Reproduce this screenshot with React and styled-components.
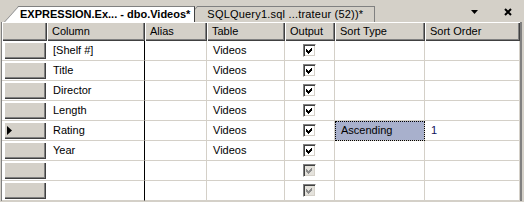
import React from "react";
import styled, { createGlobalStyle } from "styled-components";

const GlobalStyle = createGlobalStyle`
  html, body {
    margin: 0;
    padding: 0;
    background: #d4d0c8;
  }
  body {
    font-family: "Liberation Sans", Arial, sans-serif;
    font-size: 11px;
    color: #000;
  }
`;

const Window = styled.div`
  width: 524px;
  height: 202px;
  background: #d4d0c8;
  display: flex;
  flex-direction: column;
  overflow: hidden;
`;

const TabStrip = styled.div`
  height: 22px;
  box-sizing: border-box;
  display: flex;
  align-items: flex-end;
  padding-left: 4px;
`;

const Tab = styled.div`
  position: relative;
  z-index: ${(p) => (p.$active ? 2 : 1)};
  height: 16px;
  line-height: 16px;
  padding: 0 ${(p) => (p.$active ? 5 : 12)}px 0 ${(p) => (p.$active ? 16 : 24)}px;
  margin-left: ${(p) => (p.$active ? 0 : -12)}px;
  font-weight: ${(p) => (p.$active ? 700 : 400)};
  letter-spacing: ${(p) => (p.$active ? 0 : 0.2)}px;
  white-space: nowrap;

  &::before {
    content: "";
    position: absolute;
    z-index: -1;
    left: 0;
    top: 0;
    bottom: 0;
    width: 20px;
    background: ${(p) => (p.$active ? "#fff" : "#d4d0c8")};
    border-left: 1px solid #808080;
    border-top: 1px solid #808080;
    transform: skewX(-42deg);
    transform-origin: bottom left;
  }

  &::after {
    content: "";
    position: absolute;
    z-index: -1;
    left: 15px;
    right: 0;
    top: 0;
    bottom: 0;
    background: ${(p) => (p.$active ? "#fff" : "#d4d0c8")};
    border-top: 1px solid #808080;
    border-right: 1px solid ${(p) => (p.$active ? "#404040" : "#808080")};
  }
`;

const Controls = styled.div`
  margin-left: auto;
  align-self: center;
  display: flex;
  align-items: center;
  gap: 26px;
  padding: 2px 12px 0 0;
`;

const Grid = styled.div`
  display: grid;
  grid-template-columns: 45px 98px 62px 78px 50px 90px 95px;
  grid-template-rows: 19px repeat(8, 20px);
  width: 518px;
  margin-left: 1px;
  border-left: 1px solid #808080;
  border-right: 2px solid #808080;
  background: #fff;
`;

const HeaderCell = styled.div`
  box-sizing: border-box;
  background: #d4d0c8;
  box-shadow: inset 1px 1px #fff, inset -1px -1px #404040,
    inset -2px -2px #808080;
  padding-left: 5px;
  line-height: 19px;
  white-space: nowrap;
`;

const RowHeader = styled.div`
  box-sizing: border-box;
  display: flex;
  padding: 1px 1px 1px 2px;
  background: #fff;
  border-bottom: 1px solid #d4d0c8;
`;

const RowButton = styled.div`
  flex: 1;
  display: flex;
  align-items: center;
  padding-left: 3px;
  background: #d4d0c8;
  box-shadow: inset 1px 1px #fff, inset -1px -1px #404040,
    inset -2px -2px #808080;
`;

const Cell = styled.div`
  box-sizing: border-box;
  padding-left: 6px;
  line-height: 19px;
  white-space: nowrap;
  color: ${(p) => (p.$number ? "#10105a" : "#000")};
  border-bottom: 1px solid #d4d0c8;
  border-right: 1px solid ${(p) => (p.$divider ? "#000" : "#d4d0c8")};
  background: ${(p) => (p.$selected ? "#a8b0cc" : "transparent")};
  outline: ${(p) => (p.$selected ? "1px dotted #000" : "none")};
  outline-offset: -1px;
`;

const CheckCell = styled(Cell)`
  display: flex;
  align-items: center;
  justify-content: center;
  padding-left: 0;
`;

const CheckBox = styled.div`
  box-sizing: border-box;
  width: 13px;
  height: 13px;
  display: flex;
  align-items: center;
  justify-content: center;
  border-top: 1px solid #808080;
  border-left: 1px solid #808080;
  border-bottom: 1px solid #fff;
  border-right: 1px solid #fff;
  box-shadow: inset 1px 1px #404040, inset -1px -1px #d4d0c8;
  background: ${(p) => (p.$disabled ? "#e4e2dc" : "#fff")};
`;

const Check = ({ color }) => (
  <svg width="9" height="9" viewBox="0 0 9 9" shapeRendering="crispEdges">
    <path d="M1 3h1v1h1v1h1v-1h1v-1h1v-1h1v3h-1v1h-1v1h-1v1h-1v-1h-1v-1h-1z" fill={color} />
  </svg>
);

const Arrow = () => (
  <svg width="5" height="9" viewBox="0 0 5 9">
    <path d="M0 0 L5 4.5 L0 9 Z" fill="#000" />
  </svg>
);

const columns = ["Column", "Alias", "Table", "Output", "Sort Type", "Sort Order"];

const rows = [
  { column: "[Shelf #]", table: "Videos", output: true },
  { column: "Title", table: "Videos", output: true },
  { column: "Director", table: "Videos", output: true },
  { column: "Length", table: "Videos", output: true },
  { column: "Rating", table: "Videos", output: true, sortType: "Ascending", sortOrder: "1", current: true },
  { column: "Year", table: "Videos", output: true },
  { column: "", table: "", output: true, disabled: true },
  { column: "", table: "", output: true, disabled: true },
];

export default function App() {
  return (
    <Window>
      <GlobalStyle />
      <TabStrip>
        <Tab $active>EXPRESSION.Ex... - dbo.Videos*</Tab>
        <Tab>SQLQuery1.sql ...trateur (52))*</Tab>
        <Controls>
          <svg width="7" height="4" viewBox="0 0 7 4">
            <path d="M0 0 H7 L3.5 4 Z" fill="#000" />
          </svg>
          <svg width="8" height="8" viewBox="0 0 8 8">
            <path d="M1 1 L7 7 M7 1 L1 7" stroke="#000" strokeWidth="2" />
          </svg>
        </Controls>
      </TabStrip>
      <Grid>
        <HeaderCell />
        {columns.map((c) => (
          <HeaderCell key={c}>{c}</HeaderCell>
        ))}
        {rows.map((r, i) => (
          <React.Fragment key={i}>
            <RowHeader>
              <RowButton>{r.current && <Arrow />}</RowButton>
            </RowHeader>
            <Cell $divider>{r.column}</Cell>
            <Cell />
            <Cell>{r.table}</Cell>
            <CheckCell>
              <CheckBox $disabled={r.disabled}>
                {r.output && <Check color={r.disabled ? "#8c8c8c" : "#000"} />}
              </CheckBox>
            </CheckCell>
            <Cell $selected={!!r.sortType}>{r.sortType}</Cell>
            <Cell $number>{r.sortOrder}</Cell>
          </React.Fragment>
        ))}
      </Grid>
    </Window>
  );
}
